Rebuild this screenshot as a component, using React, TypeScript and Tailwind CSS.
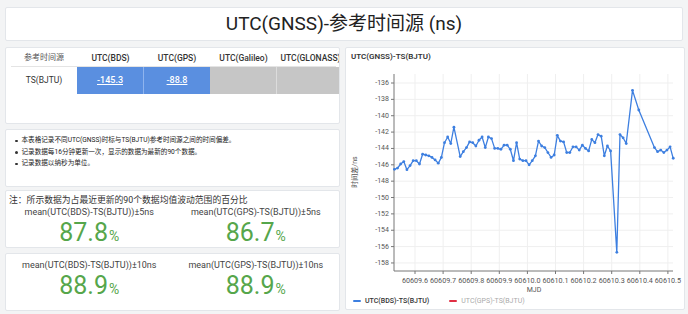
const BLUE = "#3d7fe0";

// samples every 16 min, [slot, ns]
const SERIES: [number, number][] = [
  [0, -146.55], [1, -146.4], [2, -145.9], [3, -145.6], [4, -146.6], [5, -146.1],
  [6, -145.5], [7, -145.5], [8, -145.9], [9, -144.7], [10, -144.8], [11, -144.9],
  [12, -145.1], [13, -145.4], [14, -145.8], [15, -145.1], [16, -143.3], [17, -142.6],
  [18, -143.4], [19, -141.4], [21, -145.0], [22, -144.4], [23, -143.9], [24, -143.2],
  [25, -143.3], [26, -143.7], [27, -143.0], [28, -142.6], [29, -143.9], [30, -142.6],
  [31, -142.8], [32, -144.0], [33, -144.0], [34, -144.1], [35, -143.6], [36, -143.6],
  [37, -144.1], [38, -145.5], [39, -143.3], [40, -145.3], [41, -145.5], [42, -145.5],
  [43, -146.0], [44, -145.5], [45, -144.9], [46, -143.1], [47, -143.7], [48, -143.9],
  [49, -144.5], [50, -145.1], [51, -144.8], [52, -142.4], [53, -143.1], [54, -143.2],
  [55, -144.5], [56, -144.5], [57, -143.8], [58, -143.8], [59, -144.2], [60, -143.6],
  [61, -144.0], [62, -144.3], [63, -142.9], [64, -143.3], [65, -142.3], [66, -142.5],
  [67, -144.9], [68, -143.7], [69, -144.3], [71, -156.7], [72, -142.3], [73, -142.7],
  [74, -143.4], [76, -136.9], [78, -139.3], [83, -143.9], [84, -144.4], [85, -144.2],
  [86, -144.5], [87, -144.2], [88, -143.8], [89, -145.2],
];

const Y_TICKS = [-136, -138, -140, -142, -144, -146, -148, -150, -152, -154, -156, -158];
const X_TICKS = ["60609.6", "60609.7", "60609.8", "60609.9", "60610.0", "60610.1", "60610.2", "60610.3", "60610.4", "60610.5"];

const AX_L = 48;
const AX_R = 327;
const AX_T = 9;
const AX_B = 206;

const xPx = (slot: number) => 48.4 + slot * 3.133;
const yPx = (v: number) => 18 + (-136 - v) * 8.18;

function Panel({ className = "", children }: { className?: string; children: React.ReactNode }) {
  return (
    <div className={"rounded-[2px] border border-[#e3e6ea] bg-white " + className}>
      {children}
    </div>
  );
}

function OffsetTable() {
  return (
    <Panel className="h-[77px] overflow-hidden pl-[5px] pr-[3px] pt-[2px]">
      <div className="flex h-[17px] items-center border-b border-[#e4e4e4] text-[8.5px] font-medium text-[#333]">
        <div className="w-[66px] shrink-0 text-center text-[8px] font-normal text-[#555]">参考时间源</div>
        <div className="w-[67px] shrink-0 text-center">UTC(BDS)</div>
        <div className="w-[66px] shrink-0 text-center">UTC(GPS)</div>
        <div className="w-[67px] shrink-0 text-center">UTC(Galileo)</div>
        <div className="w-[67px] shrink-0 whitespace-nowrap text-center">UTC(GLONASS)</div>
      </div>
      <div className="flex h-[27px] items-stretch text-[9px]">
        <div className="flex w-[66px] shrink-0 items-center justify-center text-[8.5px] text-[#333]">TS(BJTU)</div>
        <div className="flex w-[67px] shrink-0 items-center justify-center border-r border-[#8fb4ee] bg-[#5a8fe0] font-medium text-white underline">-145.3</div>
        <div className="flex w-[66px] shrink-0 items-center justify-center bg-[#5a8fe0] font-medium text-white underline">-88.8</div>
        <div className="w-[67px] shrink-0 border-r border-[#dcdcdc] bg-[#c6c6c6]" />
        <div className="w-[67px] shrink-0 bg-[#c6c6c6]" />
      </div>
    </Panel>
  );
}

function Notes() {
  const lines = [
    "本表格记录不同UTC(GNSS)时标与TS(BJTU)参考时间源之间的时间偏差。",
    "记录数据每16分钟更新一次，显示的数据为最新的90个数据。",
    "记录数据以纳秒为单位。",
  ];
  return (
    <Panel className="mt-[5px] h-[58px] pl-[9px] pt-[5px]">
      <ul className="flex flex-col text-[6.6px] leading-[11.5px] text-[#222]">
        {lines.map((l) => (
          <li key={l} className="flex items-center gap-[4px]">
            <span className="h-[2.5px] w-[2.5px] rounded-full bg-[#333]" />
            {l}
          </li>
        ))}
      </ul>
    </Panel>
  );
}

function Stat({ label, value }: { label: string; value: string }) {
  return (
    <div className="flex flex-col items-center">
      <div className="text-[9px] leading-[12px] text-[#444]">{label}</div>
      <div className="mt-[1px] flex items-baseline text-[#56a64b]">
        <span className="text-[25px] leading-[28px]">{value}</span>
        <span className="ml-[1px] text-[14px]">%</span>
      </div>
    </div>
  );
}

function Stats() {
  return (
    <>
      <Panel className="mt-[3px] h-[58px] pt-[4px]">
        <div className="pl-[3px] text-[8.8px] leading-[11px] text-[#333]">
          注：所示数据为占最近更新的90个数据均值波动范围的百分比
        </div>
        <div className="grid grid-cols-2">
          <Stat label="mean(UTC(BDS)-TS(BJTU))±5ns" value="87.8" />
          <Stat label="mean(UTC(GPS)-TS(BJTU))±5ns" value="86.7" />
        </div>
      </Panel>
      <Panel className="mt-[5px] h-[58px] pt-[5px]">
        <div className="grid grid-cols-2">
          <Stat label="mean(UTC(BDS)-TS(BJTU))±10ns" value="88.9" />
          <Stat label="mean(UTC(GPS)-TS(BJTU))±10ns" value="88.9" />
        </div>
      </Panel>
    </>
  );
}

function OffsetChart() {
  const pts = SERIES.map(([s, v]) => `${xPx(s).toFixed(1)},${yPx(v).toFixed(1)}`).join(" ");
  return (
    <svg width={338} height={228} className="block" fontFamily="Roboto, 'Noto Sans CJK SC', sans-serif">
      {Y_TICKS.map((t) => (
        <g key={t}>
          <line x1={AX_L} x2={AX_R} y1={yPx(t)} y2={yPx(t)} stroke="#efefef" />
          <line x1={AX_L - 3} x2={AX_L} y1={yPx(t)} y2={yPx(t)} stroke="#777" />
          <text x={AX_L - 5} y={yPx(t)} textAnchor="end" dominantBaseline="central" fontSize={7} fill="#555">
            {t}
          </text>
        </g>
      ))}
      {X_TICKS.map((t, k) => {
        const x = 69 + k * 28.1;
        return (
          <g key={t}>
            <line x1={x} x2={x} y1={AX_T} y2={AX_B} stroke="#efefef" />
            <line x1={x} x2={x} y1={AX_B} y2={AX_B + 3} stroke="#777" />
            <text x={x} y={215} textAnchor="middle" dominantBaseline="central" fontSize={7.2} fill="#555">
              {t}
            </text>
          </g>
        );
      })}
      <line x1={AX_L} x2={AX_L} y1={AX_T} y2={AX_B} stroke="#777" />
      <line x1={AX_L} x2={AX_R} y1={AX_B} y2={AX_B} stroke="#777" />
      <text x={188} y={225} textAnchor="middle" dominantBaseline="central" fontSize={7} fill="#555">
        MJD
      </text>
      <text
        x={9}
        y={107}
        textAnchor="middle"
        dominantBaseline="central"
        fontSize={7}
        fill="#555"
        transform="rotate(-90 9 107)"
      >
        时间差/ns
      </text>
      <polyline points={pts} fill="none" stroke={BLUE} strokeWidth={1.3} strokeLinejoin="round" />
      {SERIES.map(([s, v]) => (
        <circle key={s} cx={xPx(s)} cy={yPx(v)} r={1.4} fill={BLUE} />
      ))}
    </svg>
  );
}

export default function App() {
  return (
    <div className="h-[314px] w-[688px] overflow-hidden bg-[#f3f4f5] px-[5px] pt-[7px] font-['Roboto','Noto_Sans_CJK_SC',sans-serif]">
      <Panel className="flex h-[34px] items-center justify-center">
        <h1 className="text-[19px] text-[#222]">UTC(GNSS)-参考时间源 (ns)</h1>
      </Panel>
      <div className="mt-[6px] grid grid-cols-[335px_1fr] gap-[5px]">
        <div className="flex flex-col">
          <OffsetTable />
          <Notes />
          <Stats />
        </div>
        <Panel className="h-[263px]">
          <div className="h-[17px] pl-[5px] pt-[4px] text-[8px] font-semibold leading-[10px] text-[#333]">
            UTC(GNSS)-TS(BJTU)
          </div>
          <OffsetChart />
          <div className="flex h-[16px] items-center pl-[7px] text-[7px]">
            <div className="flex items-center gap-[4px] font-medium text-[#333]">
              <span className="h-[2px] w-[8px] rounded-full bg-[#3d7fe0]" />
              UTC(BDS)-TS(BJTU)
            </div>
            <div className="ml-[20px] flex items-center gap-[4px] text-[#aaa]">
              <span className="h-[2px] w-[8px] rounded-full bg-[#e02f44]" />
              UTC(GPS)-TS(BJTU)
            </div>
          </div>
        </Panel>
      </div>
    </div>
  );
}
